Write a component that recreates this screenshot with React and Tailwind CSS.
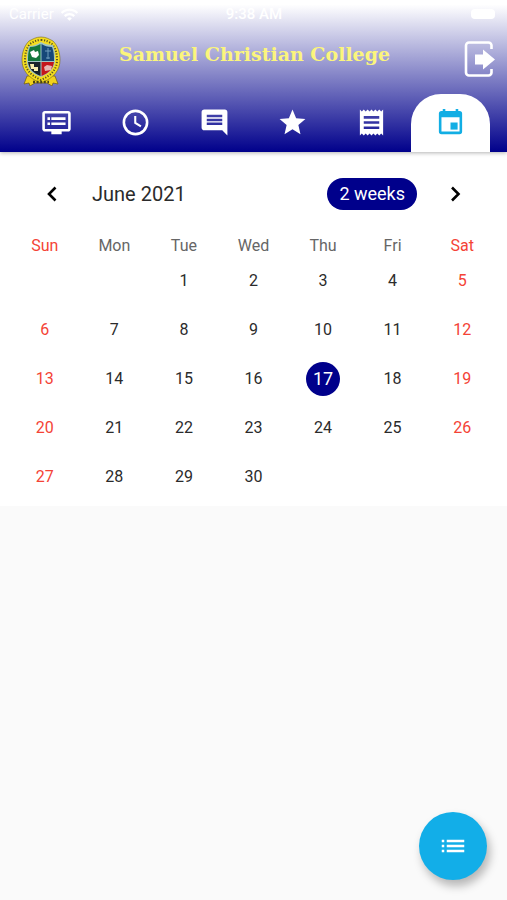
import clsx from 'clsx'
import {
  MdDvr, MdComment, MdStar, MdReceipt, MdList, MdWifi,
} from 'react-icons/md'

const tabs = [
  { id: 'board',    icon: MdDvr,        label: 'Board' },
  { id: 'history',  icon: ClockIcon,    label: 'History' },
  { id: 'messages', icon: MdComment,    label: 'Messages' },
  { id: 'starred',  icon: MdStar,       label: 'Starred' },
  { id: 'receipts', icon: MdReceipt,    label: 'Receipts' },
  { id: 'calendar', icon: CalendarIcon, label: 'Calendar' },
]

const weekdays = ['Sun', 'Mon', 'Tue', 'Wed', 'Thu', 'Fri', 'Sat']

// June 2021 starts on a Tuesday
const weeks = [0, 1, 2, 3, 4].map(w =>
  weekdays.map((_, d) => {
    const day = w * 7 + d - 1
    return day >= 1 && day <= 30 ? day : null
  })
)

function Crest() {
  return (
    <svg viewBox="0 0 40 50" className="w-10 h-[50px]" role="img" aria-label="College crest">
      <path d="M6 40l-3 8 5-1 1 3 5-3h12l5 3 1-3 5 1-3-8z" fill="#f2d21c" stroke="#6b5a10" strokeWidth=".7" />
      <path d="M20 1c5 0 8 2 12 4 5 5 7 12 7 19 0 10-6 18-19 23C7 42 1 34 1 24 1 17 3 10 8 5c4-2 7-4 12-4z" fill="#f5dd1e" stroke="#75691a" strokeWidth=".6" />
      <path d="M20 4c5 0 8 2 11 4 4 5 5 10 5 16 0 9-5 15-16 20C9 39 4 33 4 24c0-6 1-11 5-16 3-2 6-4 11-4z" fill="none" stroke="#5a5420" strokeWidth="2" strokeDasharray="1.2 1.6" />
      <path d="M20 6c3 2 7 3 12 3 2 5 2 10 2 15 0 8-5 13-14 17C11 38 6 33 6 25c0-5 0-10 2-15 5 0 9-2 12-4z" fill="#9fc4c4" />
      <path d="M19.5 8v17H7c0-5 0-9 2-14 4 0 7-1 10.5-3z" fill="#13763c" />
      <path d="M20.5 8c3 2 6 3 10.5 3 2 5 2 9 2 14H20.5z" fill="#164779" />
      <path d="M7 26h12.5v14C12 37 8 33 7 26z" fill="#17232b" />
      <path d="M20.5 26h12.5c-1 7-5 11-12.5 14z" fill="#c4161c" />
      <path d="M9 16l4-2 1 2 3-1 1 4-3 3-4-1z" fill="#fff" />
      <path d="M27 12v11M24 15h6M25 22h4" stroke="#6f9dbd" fill="none" />
      <path d="M9 28h4v3h4v4h-4v-2h-3z" fill="#f4edb0" />
      <path d="M23 31l3-2 5 1-1 4-6 1z" fill="#e6b6b4" />
      <path d="M12 46h16" stroke="#4a4315" strokeWidth="2.4" strokeDasharray="2 1.6" />
    </svg>
  )
}

function ClockIcon({ size }) {
  return (
    <svg viewBox="0 0 24 24" width={size} height={size} fill="none" stroke="currentColor" aria-hidden="true">
      <circle cx="12" cy="12" r="9" strokeWidth="2" />
      <path d="M11.800 7v5.300l4.400 2.700" strokeWidth="1.600" />
    </svg>
  )
}

function CalendarIcon({ size }) {
  return (
    <svg viewBox="0 0 24 24" width={size} height={size} fill="currentColor" aria-hidden="true">
      <path fillRule="evenodd" d="M6 1.500h2V3h8V1.500h2V3h1a2 2 0 0 1 2 2v14a2 2 0 0 1-2 2H5a2 2 0 0 1-2-2V5a2 2 0 0 1 2-2h1zM5 8v11h14V8z" />
      <path d="M12 12h5.500v5.500H12z" />
    </svg>
  )
}

function Chevron({ next }) {
  return (
    <svg viewBox="0 0 28 28" className="size-7" fill="none" stroke="black" strokeWidth="2.6" aria-hidden="true">
      <path d={next ? 'M11 7.500l6.500 6.500-6.500 6.500' : 'M17.500 7.500L11 14l6.500 6.500'} />
    </svg>
  )
}

function ExitIcon() {
  return (
    <svg viewBox="0 0 32 36" className="w-8 h-9" fill="none" aria-hidden="true">
      <path d="M27.5 8V4.500a3 3 0 0 0-3-3H5a3 3 0 0 0-3 3v27a3 3 0 0 0 3 3h19.500a3 3 0 0 0 3-3V28" stroke="white" strokeWidth="2.6" />
      <path d="M11 13.500h8V8.500l12 10L19 28.500v-5h-8z" fill="white" />
    </svg>
  )
}

function StatusBar() {
  return (
    <div className="grid grid-cols-3 items-center h-7 pl-[9px] pr-3 text-[15px] text-white">
      <div className="flex items-center gap-1.5">
        <span>Carrier</span>
        <MdWifi size={19} />
      </div>
      <span className="pl-1 text-center font-medium">9:38 AM</span>
      <span className="justify-self-end w-6 h-2.5 rounded-sm bg-white" />
    </div>
  )
}

function Header() {
  return (
    <header className="relative bg-linear-to-b/srgb from-white from-3% to-[#00008b] shadow-[0_1px_4px_rgba(0,0,0,0.3)]">
      <StatusBar />
      <div className="flex items-center justify-between h-[66px] pl-[21px] pr-[11px]">
        <Crest />
        <h1 className="pb-3.5 pr-4 font-['DejaVu_Serif',serif] text-[19px] font-bold text-[#fbf57c]">
          Samuel Christian College
        </h1>
        <button aria-label="Log out" className="pb-1">
          <ExitIcon />
        </button>
      </div>
      <nav className="grid grid-cols-6 px-[17px]">
        {tabs.map(({ id, icon: Icon, label }) => (
          <button
            key={id}
            aria-label={label}
            className={clsx(
              'flex items-center justify-center h-[58px] pb-0.5',
              id === 'calendar' ? 'rounded-t-[30px] bg-white text-[#12aee4]' : 'text-white',
            )}
          >
            <Icon size={31} />
          </button>
        ))}
      </nav>
    </header>
  )
}

function Calendar() {
  return (
    <section className="bg-white px-[10px] pt-[26px] pb-[5px]">
      <div className="flex items-center h-8 px-7">
        <button aria-label="Previous month"><Chevron /></button>
        <h2 className="flex-1 pl-[26px] text-xl text-[#2b2b2b]">June 2021</h2>
        <button className="h-8 px-3 rounded-full bg-[#00008b] text-lg text-white">2 weeks</button>
        <button aria-label="Next month" className="ml-6"><Chevron next /></button>
      </div>
      <table className="w-full mt-[25px] table-fixed text-center text-base leading-5">
        <thead>
          <tr>
            {weekdays.map((name, i) => (
              <th
                key={name}
                scope="col"
                className={clsx('h-[21px] p-0 font-normal', i % 6 === 0 ? 'text-[#f44336]' : 'text-[#666666]')}
              >
                {name}
              </th>
            ))}
          </tr>
        </thead>
        <tbody>
          {weeks.map((week, w) => (
            <tr key={w}>
              {week.map((day, d) => (
                <td key={d} className="h-[49px] p-0">
                  {day && (
                    <button
                      className={clsx(
                        'size-[34px] rounded-full',
                        day === 17 && 'bg-[#00008b] text-lg text-white',
                        day !== 17 && (d % 6 === 0 ? 'text-[#f44336]' : 'text-[#2b2b2b]'),
                      )}
                    >
                      {day}
                    </button>
                  )}
                </td>
              ))}
            </tr>
          ))}
        </tbody>
      </table>
    </section>
  )
}

export default function App() {
  return (
    <div className="min-h-screen bg-[#fafafa] font-[Roboto,sans-serif]">
      <Header />
      <Calendar />
      <button
        aria-label="Show list"
        className="fixed bottom-5 right-5 flex items-center justify-center size-[68px] rounded-full bg-[#12aee8] text-white shadow-[3px_6px_10px_rgba(0,0,0,0.28)]"
      >
        <MdList size={30} />
      </button>
    </div>
  )
}
